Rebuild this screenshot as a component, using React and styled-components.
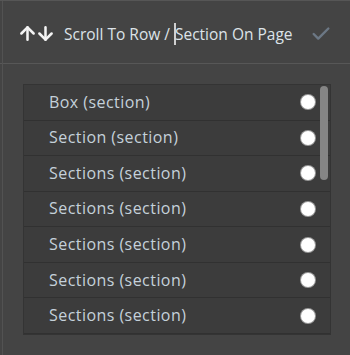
import React from "react";
import styled, { createGlobalStyle } from "styled-components";
import { ArrowUp, ArrowDown, Check } from "lucide-react";

const GlobalStyle = createGlobalStyle`
  html, body {
    margin: 0;
    padding: 0;
    background: #444444;
  }
  body {
    font-family: "Open Sans", "Noto Sans", sans-serif;
  }
`;

const Frame = styled.div`
  position: relative;
  width: 350px;
  height: 355px;
  box-sizing: border-box;
  border-top: 1px solid #565656;
  background: #444444;

  &::before {
    content: "";
    position: absolute;
    left: 2px;
    top: 0;
    bottom: 0;
    width: 1px;
    background: #525252;
  }
`;

const Header = styled.div`
  display: flex;
  align-items: center;
  height: 63px;
  box-sizing: border-box;
  padding: 3px 18px 0 17px;
  border-bottom: 1px solid #575757;
`;

const Arrows = styled.div`
  display: flex;
  align-items: center;
  gap: 5px;
  color: #f4f4f4;
  margin-right: 12px;

  svg {
    margin: 0 -4px;
  }
  svg:first-child {
    margin-left: 0;
  }
`;

const Title = styled.div`
  flex: 1;
  font-size: 15.5px;
  color: #dde3e8;
  white-space: nowrap;
  display: flex;
  align-items: center;
`;

const Caret = styled.span`
  display: inline-block;
  width: 2px;
  height: 22px;
  background: #d0d0d0;
  margin-right: -1px;
`;

const Confirm = styled.div`
  color: #6c7885;
  display: flex;
  align-items: center;
`;

const Body = styled.div`
  padding: 20px 19px 0 23px;
`;

const List = styled.div`
  position: relative;
  border: 1px solid #343434;
  background: #3c3c3c;
  height: 249px;
  overflow: hidden;
`;

const Row = styled.div`
  display: flex;
  align-items: center;
  justify-content: space-between;
  height: 35.57px;
  box-sizing: border-box;
  padding: 0 15px 0 25px;
  border-bottom: 1px solid #313131;
  font-size: 16px;
  letter-spacing: 0.45px;
  color: #c5d1da;

  &:last-child {
    border-bottom: none;
  }
`;

const Label = styled.span`
  margin-top: -1px;
`;

const Radio = styled.span`
  width: 14px;
  height: 14px;
  border-radius: 50%;
  background: #ffffff;
  box-shadow: 0 0 0 1px #9a9a9a;
`;

const Thumb = styled.div`
  position: absolute;
  top: 1px;
  right: 2px;
  width: 8px;
  height: 94px;
  border-radius: 4px;
  background: #858585;
`;

const rows = [
  "Box (section)",
  "Section (section)",
  "Sections (section)",
  "Sections (section)",
  "Sections (section)",
  "Sections (section)",
  "Sections (section)",
];

export default function App() {
  return (
    <>
      <GlobalStyle />
      <Frame>
        <Header>
          <Arrows>
            <ArrowUp size={21} strokeWidth={2.9} />
            <ArrowDown size={21} strokeWidth={2.9} />
          </Arrows>
          <Title>
            Scroll To Row /&nbsp;<Caret />Section On Page
          </Title>
          <Confirm>
            <Check size={22} strokeWidth={2.6} />
          </Confirm>
        </Header>
        <Body>
          <List>
            {rows.map((label, i) => (
              <Row key={i}>
                <Label>{label}</Label>
                <Radio />
              </Row>
            ))}
            <Thumb />
          </List>
        </Body>
      </Frame>
    </>
  );
}
